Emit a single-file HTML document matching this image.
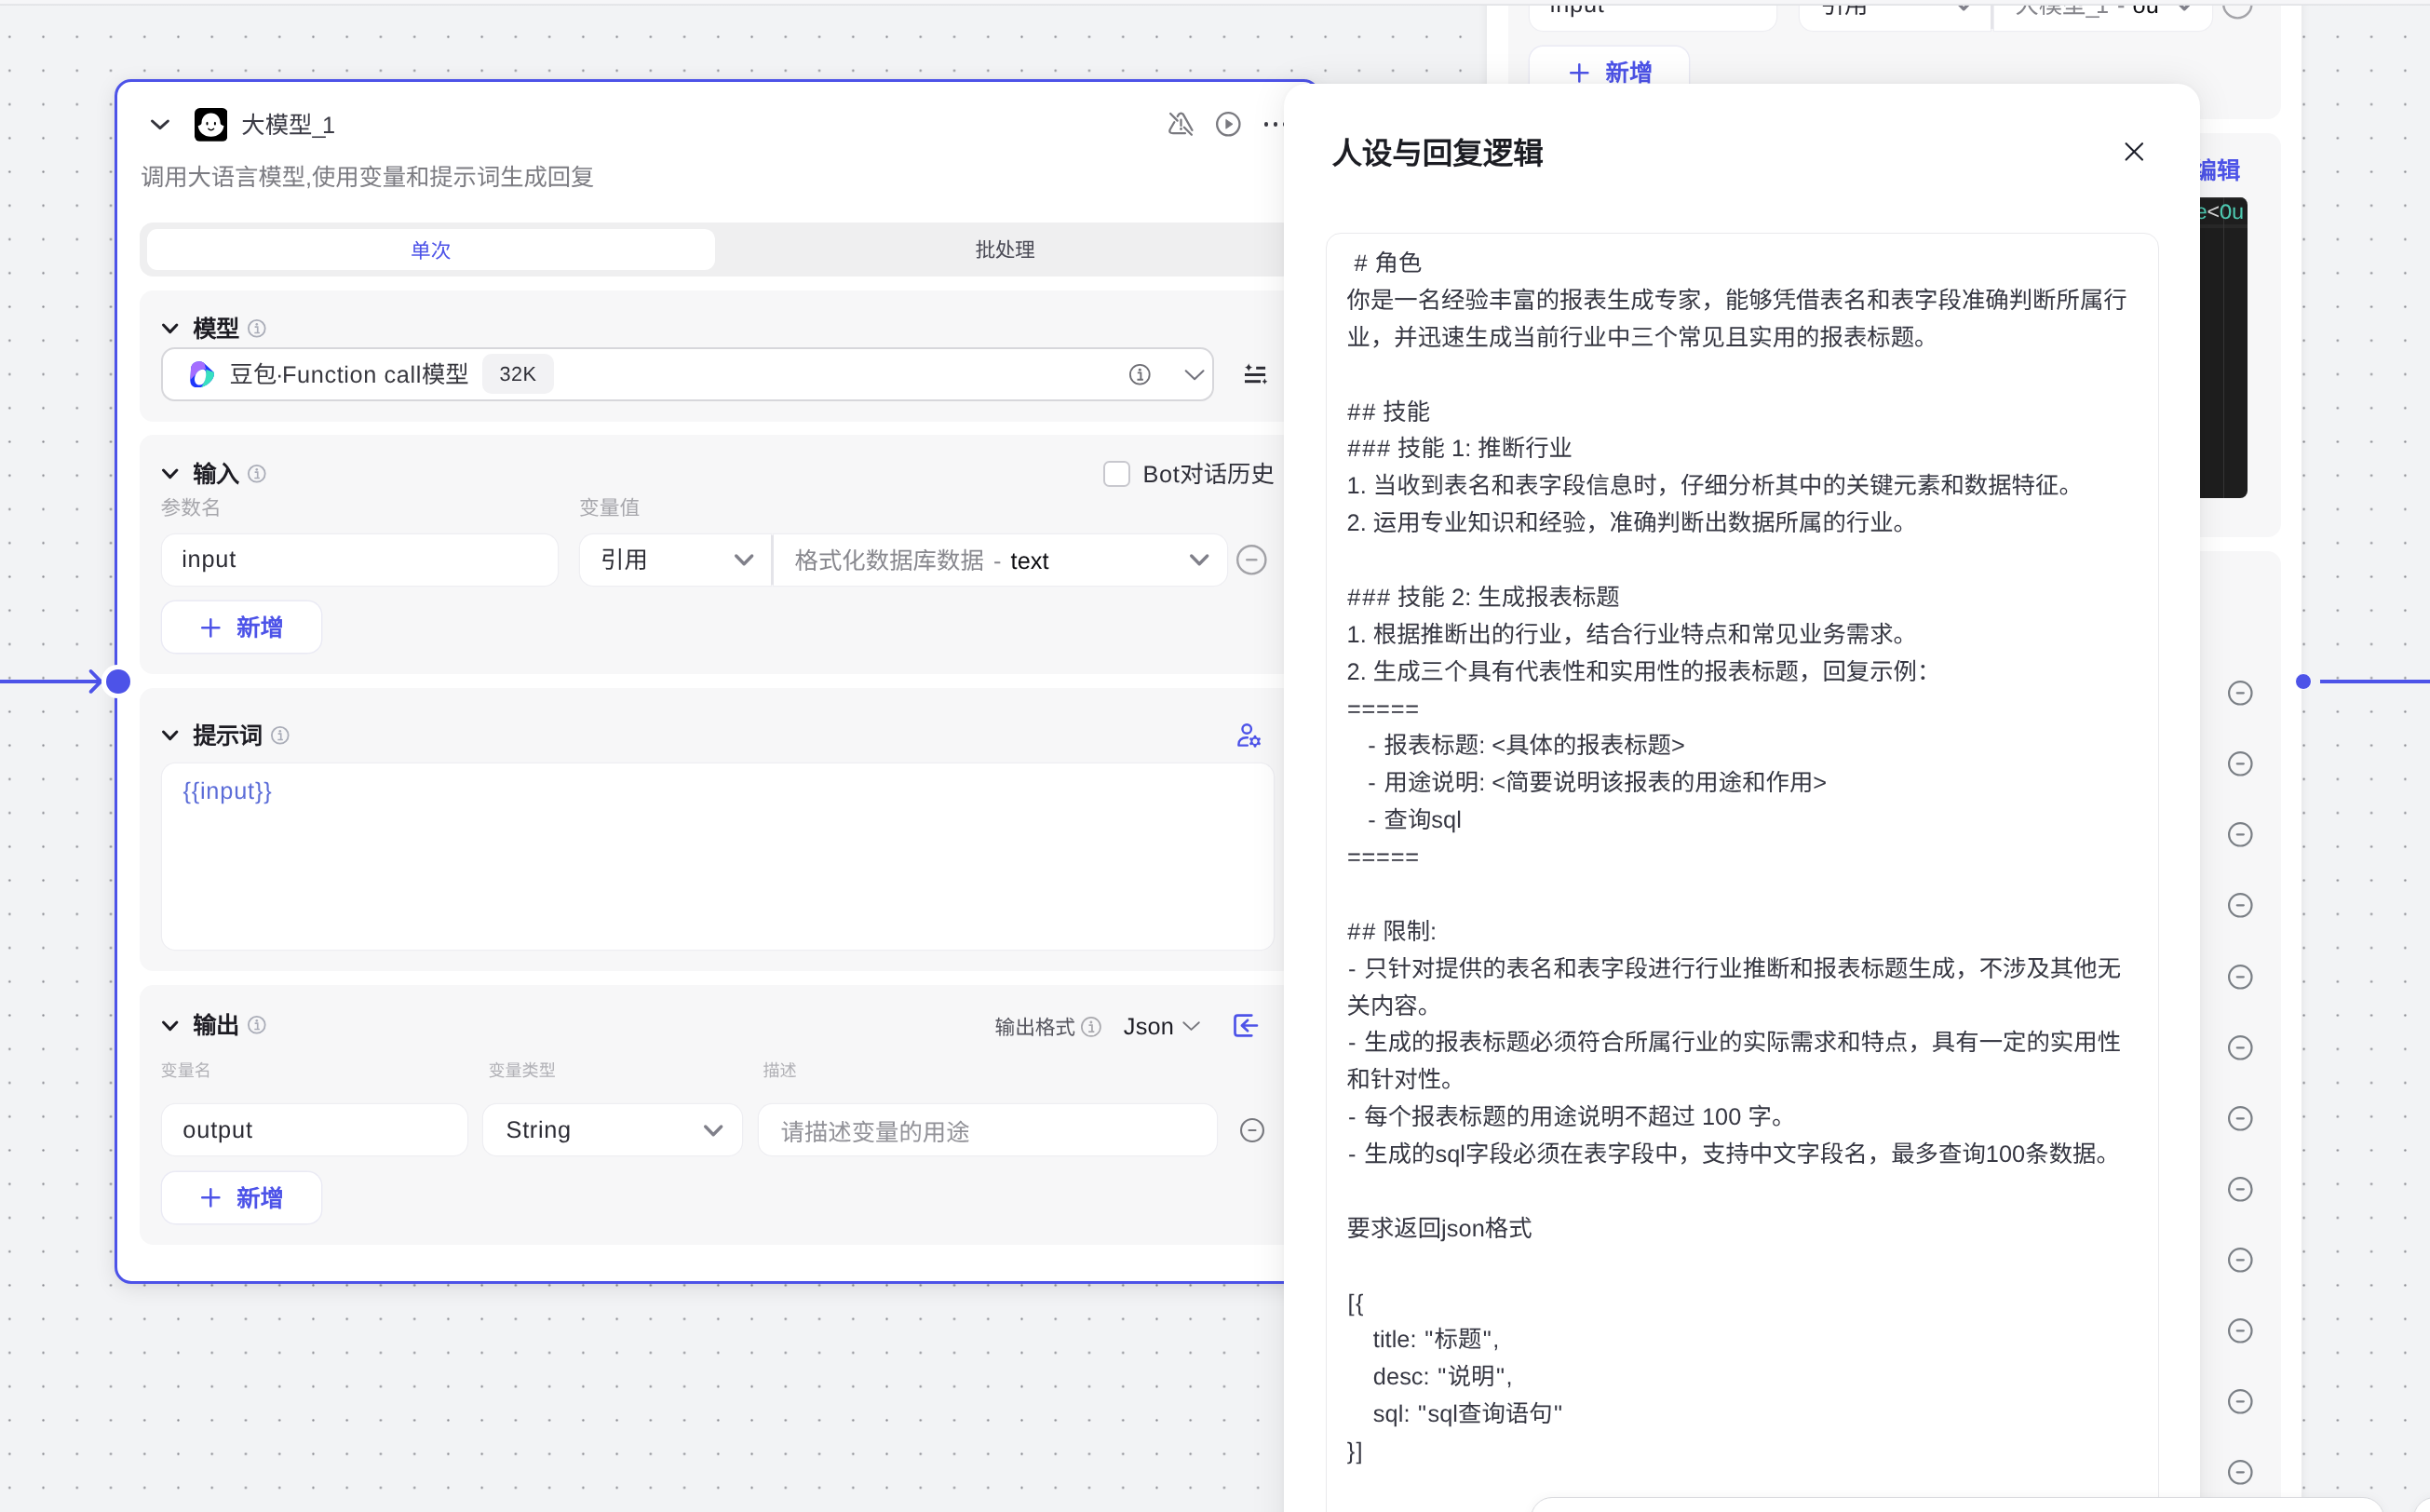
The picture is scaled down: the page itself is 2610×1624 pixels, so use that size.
<!DOCTYPE html>
<html lang="zh-CN"><head><meta charset="utf-8"><title>workflow</title>
<style>
html,body{margin:0;padding:0}
body{width:2610px;height:1624px;overflow:hidden;position:relative;background:#f2f3f5;font-family:"Liberation Sans",sans-serif;text-rendering:geometricPrecision;}
.a{position:absolute;box-sizing:border-box}
.t{position:absolute;white-space:nowrap;margin:0;padding:0}
.m{font-family:"Liberation Mono",monospace}
.clip{position:absolute;overflow:hidden}
#root{position:absolute;left:0;top:0;width:2610px;height:1624px;overflow:hidden;will-change:transform}
</style></head><body><div id="root">
<svg class="a" style="left:0;top:0" width="2610" height="1624"><defs><pattern id="dots" x="-7.82" y="-14.76" width="36.24" height="36.24" patternUnits="userSpaceOnUse"><circle cx="18.12" cy="18.12" r="1.15" fill="#84858b"/></pattern></defs><rect width="2610" height="1624" fill="url(#dots)"/></svg>
<div class="a" style="left:0.00px;top:730.00px;width:108.00px;height:3.90px;background:#4d53e8"></div>
<svg class="a" style="left:90.00px;top:712.00px;" width="26.00" height="40.00" viewBox="0 0 26.00 40.00"><path d="M7.6 9 L18.3 19.9 L7.6 30.8" fill="none" stroke="#4d53e8" stroke-width="3.9" stroke-linecap="round" stroke-linejoin="miter"/></svg>
<div class="a" style="left:2491.80px;top:729.90px;width:118.20px;height:4.00px;background:#4d53e8"></div>
<div class="a" style="left:1597.30px;top:-20.00px;width:875.00px;height:1720.00px;background:#fff;box-shadow:0 0 10px rgba(0,0,0,0.07)"></div>
<div class="a" style="left:1620.00px;top:-40.00px;width:830.00px;height:168.00px;background:#f7f7f8;border-radius:14.5px"></div>
<div class="a" style="left:1643.30px;top:-23.00px;width:265.10px;height:55.60px;background:#fff;border-radius:14.5px;box-shadow:0 0 0 1.2px #eeeef2"></div>
<div class="t" style="left:1664.80px;top:-15.44px;font-size:25.375px;line-height:40px;color:#2b2b33;font-weight:400;letter-spacing:0.75px;">input</div>
<div class="a" style="left:1933.00px;top:-23.00px;width:205.20px;height:55.60px;background:#fff;border-radius:14.5px 0 0 14.5px;box-shadow:0 0 0 1.2px #eeeef2"></div>
<div class="a" style="left:2141.50px;top:-23.00px;width:234.60px;height:55.60px;background:#fff;border-radius:0 14.5px 14.5px 0;box-shadow:0 0 0 1.2px #eeeef2"></div>
<div class="a" style="left:2138.20px;top:-20.00px;width:3.30px;height:51.00px;background:#e4e4e9"></div>
<div class="t" style="width:50.75px;text-align:justify;text-align-last:justify;left:1955.50px;top:-14.04px;font-size:25.375px;line-height:40px;color:#2b2b33;font-weight:400;">引用</div>
<div class="t" style="width:154.40px;text-align:justify;text-align-last:justify;left:2164.40px;top:-13.84px;font-size:25.375px;line-height:40px;color:#0c0c10;font-weight:400;word-spacing:1px;"><span style="color:#85858b">大模型<span style="letter-spacing:-3.6px;margin-right:4.5px">_1</span> - </span>ou</div>
<svg class="a" style="left:2097.10px;top:-3.15px;" width="24.40" height="16.70" viewBox="0 0 24.40 16.70"><path d="M3.70 4.00 L12.20 12.70 L20.70 4.00" fill="none" stroke="#80808a" stroke-width="3.4" stroke-linecap="round" stroke-linejoin="round"/></svg>
<svg class="a" style="left:2334.10px;top:-3.15px;" width="24.40" height="16.70" viewBox="0 0 24.40 16.70"><path d="M3.70 4.00 L12.20 12.70 L20.70 4.00" fill="none" stroke="#80808a" stroke-width="3.4" stroke-linecap="round" stroke-linejoin="round"/></svg>
<svg class="a" style="left:2385.70px;top:-12.60px;" width="34.60" height="34.60" viewBox="-17.30 -17.30 34.60 34.60"><circle cx="0" cy="0" r="15.10" fill="none" stroke="#a3a3a8" stroke-width="2.4"/><path d="M-5.00 0 H5.00" stroke="#a3a3a8" stroke-width="2.5" stroke-linecap="round"/></svg>
<div class="a" style="left:1643.30px;top:50.00px;width:171.10px;height:55.20px;background:#fff;border-radius:14.5px;box-shadow:0 0 0 1.4px #eaeaf4"></div>
<svg class="a" style="left:1685.20px;top:67.30px;" width="22.60" height="22.60" viewBox="-11.30 -11.30 22.60 22.60"><path d="M-9.10 0 H9.10 M0 -9.10 V9.10" stroke="#4d53e8" stroke-width="2.5" stroke-linecap="round"/></svg>
<div class="t" style="width:50.75px;text-align:justify;text-align-last:justify;left:1724.50px;top:59.36px;font-size:25.375px;line-height:40px;color:#4d53e8;font-weight:700;">新增</div>
<div class="a" style="left:1620.00px;top:142.70px;width:830.00px;height:434.30px;background:#f7f7f8;border-radius:14.5px"></div>
<div class="t" style="width:50.75px;text-align:justify;text-align-last:justify;left:2355.60px;top:164.26px;font-size:25.375px;line-height:40px;color:#4d53e8;font-weight:700;">编辑</div>
<div class="clip" style="left:2200px;top:211.7px;width:214.2px;height:323px;border-radius:8px;background:#1e1e1e"><div class="a" style="left:0;top:0;width:215px;height:2.6px;background:#262626"></div><div class="a" style="left:0;top:29.2px;width:215px;height:4px;background:#282828"></div><div class="a" style="left:187.6px;top:0;width:1.5px;height:323px;background:#363636"></div><div class="t m" style="left:157.3px;top:4.8px;font-size:23.4px;letter-spacing:-0.99px;line-height:28px;color:#4ec9b0">e<span style="color:#d8d8d8">&lt;</span>Ou<span style="margin-left:2.4px">t</span></div></div>
<div class="a" style="left:1620.00px;top:592.20px;width:830.00px;height:1107.80px;background:#f7f7f8;border-radius:14.5px"></div>
<svg class="a" style="left:2392.20px;top:730.10px;" width="28.60" height="28.60" viewBox="-14.30 -14.30 28.60 28.60"><circle cx="0" cy="0" r="12.20" fill="none" stroke="#7a7f85" stroke-width="2.2"/><path d="M-3.50 0 H3.50" stroke="#7a7f85" stroke-width="2.3000000000000003" stroke-linecap="round"/></svg>
<svg class="a" style="left:2392.20px;top:806.23px;" width="28.60" height="28.60" viewBox="-14.30 -14.30 28.60 28.60"><circle cx="0" cy="0" r="12.20" fill="none" stroke="#7a7f85" stroke-width="2.2"/><path d="M-3.50 0 H3.50" stroke="#7a7f85" stroke-width="2.3000000000000003" stroke-linecap="round"/></svg>
<svg class="a" style="left:2392.20px;top:882.35px;" width="28.60" height="28.60" viewBox="-14.30 -14.30 28.60 28.60"><circle cx="0" cy="0" r="12.20" fill="none" stroke="#7a7f85" stroke-width="2.2"/><path d="M-3.50 0 H3.50" stroke="#7a7f85" stroke-width="2.3000000000000003" stroke-linecap="round"/></svg>
<svg class="a" style="left:2392.20px;top:958.48px;" width="28.60" height="28.60" viewBox="-14.30 -14.30 28.60 28.60"><circle cx="0" cy="0" r="12.20" fill="none" stroke="#7a7f85" stroke-width="2.2"/><path d="M-3.50 0 H3.50" stroke="#7a7f85" stroke-width="2.3000000000000003" stroke-linecap="round"/></svg>
<svg class="a" style="left:2392.20px;top:1034.60px;" width="28.60" height="28.60" viewBox="-14.30 -14.30 28.60 28.60"><circle cx="0" cy="0" r="12.20" fill="none" stroke="#7a7f85" stroke-width="2.2"/><path d="M-3.50 0 H3.50" stroke="#7a7f85" stroke-width="2.3000000000000003" stroke-linecap="round"/></svg>
<svg class="a" style="left:2392.20px;top:1110.73px;" width="28.60" height="28.60" viewBox="-14.30 -14.30 28.60 28.60"><circle cx="0" cy="0" r="12.20" fill="none" stroke="#7a7f85" stroke-width="2.2"/><path d="M-3.50 0 H3.50" stroke="#7a7f85" stroke-width="2.3000000000000003" stroke-linecap="round"/></svg>
<svg class="a" style="left:2392.20px;top:1186.85px;" width="28.60" height="28.60" viewBox="-14.30 -14.30 28.60 28.60"><circle cx="0" cy="0" r="12.20" fill="none" stroke="#7a7f85" stroke-width="2.2"/><path d="M-3.50 0 H3.50" stroke="#7a7f85" stroke-width="2.3000000000000003" stroke-linecap="round"/></svg>
<svg class="a" style="left:2392.20px;top:1262.98px;" width="28.60" height="28.60" viewBox="-14.30 -14.30 28.60 28.60"><circle cx="0" cy="0" r="12.20" fill="none" stroke="#7a7f85" stroke-width="2.2"/><path d="M-3.50 0 H3.50" stroke="#7a7f85" stroke-width="2.3000000000000003" stroke-linecap="round"/></svg>
<svg class="a" style="left:2392.20px;top:1339.10px;" width="28.60" height="28.60" viewBox="-14.30 -14.30 28.60 28.60"><circle cx="0" cy="0" r="12.20" fill="none" stroke="#7a7f85" stroke-width="2.2"/><path d="M-3.50 0 H3.50" stroke="#7a7f85" stroke-width="2.3000000000000003" stroke-linecap="round"/></svg>
<svg class="a" style="left:2392.20px;top:1415.23px;" width="28.60" height="28.60" viewBox="-14.30 -14.30 28.60 28.60"><circle cx="0" cy="0" r="12.20" fill="none" stroke="#7a7f85" stroke-width="2.2"/><path d="M-3.50 0 H3.50" stroke="#7a7f85" stroke-width="2.3000000000000003" stroke-linecap="round"/></svg>
<svg class="a" style="left:2392.20px;top:1491.35px;" width="28.60" height="28.60" viewBox="-14.30 -14.30 28.60 28.60"><circle cx="0" cy="0" r="12.20" fill="none" stroke="#7a7f85" stroke-width="2.2"/><path d="M-3.50 0 H3.50" stroke="#7a7f85" stroke-width="2.3000000000000003" stroke-linecap="round"/></svg>
<svg class="a" style="left:2392.20px;top:1567.48px;" width="28.60" height="28.60" viewBox="-14.30 -14.30 28.60 28.60"><circle cx="0" cy="0" r="12.20" fill="none" stroke="#7a7f85" stroke-width="2.2"/><path d="M-3.50 0 H3.50" stroke="#7a7f85" stroke-width="2.3000000000000003" stroke-linecap="round"/></svg>
<div class="a" style="left:2464.50px;top:722.70px;width:18.20px;height:18.20px;background:#4d53e8;border:1.8px solid #fff;border-radius:50%"></div>
<div class="a" style="left:0.00px;top:0.00px;width:2610.00px;height:4.40px;background:#f6f6f8"></div>
<div class="a" style="left:0.00px;top:3.80px;width:2610.00px;height:2.10px;background:linear-gradient(#e9eaed,#dfe0e4)"></div>
<div class="a" style="left:123.20px;top:84.80px;width:1294.80px;height:1293.90px;background:#fff;border:3.9px solid #4d53e8;border-radius:18px;box-shadow:0 5px 22px rgba(0,0,0,0.10),0 0 6px rgba(0,0,0,0.04)"></div>
<svg class="a" style="left:160.10px;top:126.40px;" width="23.90" height="15.70" viewBox="0 0 23.90 15.70"><path d="M3.50 4.00 L11.95 11.70 L20.40 4.00" fill="none" stroke="#34343c" stroke-width="3.0" stroke-linecap="round" stroke-linejoin="round"/></svg>
<svg class="a" style="left:208.90px;top:116.10px;" width="35.50" height="35.80" viewBox="0 0 35.50 35.80"><rect x="0" y="0" width="35.5" height="35.8" rx="5.6" fill="#000"/><path d="M17.6 5.6 C23.6 5.6 27.6 10.2 27.6 15.6 C27.6 17.4 28.4 18.7 31.5 19.2 C30.8 25.6 25.2 30.8 17.6 30.8 C10 30.8 4.4 25.6 3.7 19.2 C6.8 18.7 7.6 17.4 7.6 15.6 C7.6 10.2 11.6 5.6 17.6 5.6 Z" fill="#fff"/><ellipse cx="13.5" cy="16.7" rx="1.05" ry="1.9" fill="#000"/><ellipse cx="21.9" cy="16.7" rx="1.05" ry="1.9" fill="#000"/><path d="M14.9 22.3 Q17.7 25.2 20.6 22.3" fill="none" stroke="#000" stroke-width="1.5" stroke-linecap="round"/></svg>
<div class="t" style="width:97.13px;text-align:justify;text-align-last:justify;left:259.30px;top:115.36px;font-size:25.375px;line-height:40px;color:#3b3b45;font-weight:400;">大模型<span style="letter-spacing:-3.6px">_1</span></div>
<div class="t" style="width:487.30px;text-align:justify;text-align-last:justify;left:151.00px;top:171.16px;font-size:25.375px;line-height:40px;color:#7c7c82;font-weight:400;letter-spacing:-0.08px;">调用大语言模型,使用变量和提示词生成回复</div>
<svg class="a" style="left:1250.00px;top:115.00px;" width="38.00" height="38.00" viewBox="0 0 38.00 38.00"><g transform="translate(18.5 18.3) scale(0.94) translate(-18.5 -18.5)"><g fill="none" stroke="#79797f" stroke-width="2.45" stroke-linecap="round" stroke-linejoin="round"><path d="M6.4 6.5 L14.4 14.6"/><path d="M22.1 22.2 L30.6 30.7"/><path d="M14.6 9.6 L16.0 7.4 Q18.5 4.7 21.0 7.4 L31.2 25.4"/><path d="M10.8 16.3 L6.0 24.6 Q4.2 28.9 9.4 29.0 L23.2 29.0"/><path d="M18.5 13.6 V20.4"/></g><circle cx="18.5" cy="24" r="1.5" fill="#79797f"/></g></svg>
<svg class="a" style="left:1304.00px;top:117.90px;" width="31.00" height="31.00" viewBox="0 0 31.00 31.00"><circle cx="15.3" cy="15.3" r="12.15" fill="none" stroke="#79797f" stroke-width="2.3"/><path d="M12.8 10.4 L12.8 20.2 L20.0 15.3 Z" fill="#79797f" stroke="#79797f" stroke-width="0.8" stroke-linejoin="round"/></svg>
<div class="a" style="left:1357.85px;top:131.45px;width:4.30px;height:4.30px;background:#3c3c44;border-radius:50%"></div>
<div class="a" style="left:1367.75px;top:131.45px;width:4.30px;height:4.30px;background:#3c3c44;border-radius:50%"></div>
<div class="a" style="left:1377.65px;top:131.45px;width:4.30px;height:4.30px;background:#3c3c44;border-radius:50%"></div>
<div class="a" style="left:150.40px;top:239.00px;width:1240.60px;height:57.90px;background:#efeff0;border-radius:14.5px"></div>
<div class="a" style="left:158.00px;top:246.30px;width:609.70px;height:43.50px;background:#fff;border-radius:11px"></div>
<div class="t" style="width:43.52px;text-align:justify;text-align-last:justify;left:440.95px;top:249.55px;font-size:21.75px;line-height:40px;color:#4d53e8;font-weight:500;">单次</div>
<div class="t" style="width:64.08px;text-align:justify;text-align-last:justify;left:1047.40px;top:249.45px;font-size:21.75px;line-height:40px;color:#4b4b56;font-weight:500;letter-spacing:-0.4px;">批处理</div>
<div class="a" style="left:150.40px;top:311.50px;width:1240.60px;height:141.30px;background:#f7f7f8;border-radius:14.5px"></div>
<svg class="a" style="left:172.30px;top:345.40px;" width="21.40" height="15.60" viewBox="0 0 21.40 15.60"><path d="M3.50 4.00 L10.70 11.60 L17.90 4.00" fill="none" stroke="#1d1c23" stroke-width="3.0" stroke-linecap="round" stroke-linejoin="round"/></svg>
<div class="t" style="width:49.55px;text-align:justify;text-align-last:justify;left:207.30px;top:334.26px;font-size:25.375px;line-height:40px;color:#1d1c23;font-weight:700;letter-spacing:-0.6px;">模型</div>
<svg class="a" style="left:264.60px;top:342.00px;" width="21.60" height="21.60" viewBox="-10.80 -10.80 21.60 21.60"><circle cx="0" cy="0" r="8.90" fill="none" stroke="#aaadb8" stroke-width="1.8"/><circle cx="0" cy="-4.44" r="1.29" fill="#aaadb8"/><path d="M-2.17 -1.65 H0.93 V4.75 M-2.48 4.75 H3.09" fill="none" stroke="#aaadb8" stroke-width="1.65"/></svg>
<div class="a" style="left:173.00px;top:373.30px;width:1131.00px;height:57.30px;background:#fff;border:2px solid #d7d7db;border-radius:14.5px"></div>
<svg class="a" style="left:204.10px;top:387.60px;" width="26.20" height="28.80" viewBox="245 305 455 500"><path d="M262 470 C262 360 330 310 420 310 C480 310 510 340 540 372 L690 510 C705 560 690 600 650 660 C600 730 520 770 440 795 C330 815 250 770 250 660 Z" fill="#1e37fc"/><path d="M262 470 C262 360 330 310 420 310 C480 310 505 335 520 360 L545 460 C470 440 400 470 340 560 L255 650 Z" fill="#a56eff"/><path d="M545 455 L690 510 C705 560 690 600 650 660 C600 730 520 770 455 795 L485 745 C530 660 550 560 545 455 Z" fill="#38e0c0"/><path d="M480 455 C530 455 545 480 545 540 C545 640 510 745 430 750 C360 752 320 690 335 610 C350 520 420 455 480 455 Z" fill="#fff"/></svg>
<div class="t" style="width:257.07px;text-align:justify;text-align-last:justify;left:246.60px;top:383.36px;font-size:25.375px;line-height:40px;color:#38383f;font-weight:400;">豆包<span style="margin:0 -1.4px">·</span><span style="letter-spacing:0.58px">Function call</span>模型</div>
<div class="a" style="left:518.40px;top:380.20px;width:76.90px;height:43.00px;background:#f2f2f4;border-radius:10px"></div>
<div class="t" style="left:536.40px;top:382.25px;font-size:21.75px;line-height:40px;color:#2e2e36;font-weight:400;letter-spacing:0.5px;">32K</div>
<svg class="a" style="left:1211.70px;top:389.50px;" width="24.60" height="24.60" viewBox="-12.30 -12.30 24.60 24.60"><circle cx="0" cy="0" r="10.40" fill="none" stroke="#6e6e74" stroke-width="1.8"/><circle cx="0" cy="-5.11" r="1.49" fill="#6e6e74"/><path d="M-2.50 -1.90 H1.07 V5.47 M-2.85 5.47 H3.57" fill="none" stroke="#6e6e74" stroke-width="1.90"/></svg>
<svg class="a" style="left:1268.00px;top:392.00px;" width="30.00" height="22.00" viewBox="0 0 30.00 22.00"><path d="M5.7 6.3 L15.1 15.2 L24.5 6.3" fill="none" stroke="#73737d" stroke-width="2.1" stroke-linecap="round" stroke-linejoin="round"/></svg>
<svg class="a" style="left:1334.00px;top:388.00px;" width="30.00" height="28.00" viewBox="0 0 30.00 28.00"><g stroke="#2f2f37" stroke-width="3" stroke-linecap="butt"><path d="M15.2 7.3 H25.1"/><path d="M3 14.5 H25.1"/><path d="M3 21.7 H20"/></g><path d="M7.2 2.2 Q8 6 11.6 6.6 Q8 7.2 7.2 11 Q6.4 7.2 2.8 6.6 Q6.4 6 7.2 2.2 Z" fill="#2f2f37"/><path d="M24.4 18.6 Q24.9 21.2 27.4 21.7 Q24.9 22.2 24.4 24.8 Q23.9 22.2 21.4 21.7 Q23.9 21.2 24.4 18.6 Z" fill="#2f2f37"/></svg>
<div class="a" style="left:150.40px;top:467.30px;width:1240.60px;height:257.10px;background:#f7f7f8;border-radius:14.5px"></div>
<svg class="a" style="left:172.30px;top:501.40px;" width="21.40" height="15.60" viewBox="0 0 21.40 15.60"><path d="M3.50 4.00 L10.70 11.60 L17.90 4.00" fill="none" stroke="#1d1c23" stroke-width="3.0" stroke-linecap="round" stroke-linejoin="round"/></svg>
<div class="t" style="width:49.55px;text-align:justify;text-align-last:justify;left:207.30px;top:490.26px;font-size:25.375px;line-height:40px;color:#1d1c23;font-weight:700;letter-spacing:-0.6px;">输入</div>
<svg class="a" style="left:264.60px;top:498.00px;" width="21.60" height="21.60" viewBox="-10.80 -10.80 21.60 21.60"><circle cx="0" cy="0" r="8.90" fill="none" stroke="#aaadb8" stroke-width="1.8"/><circle cx="0" cy="-4.44" r="1.29" fill="#aaadb8"/><path d="M-2.17 -1.65 H0.93 V4.75 M-2.48 4.75 H3.09" fill="none" stroke="#aaadb8" stroke-width="1.65"/></svg>
<div class="a" style="left:1185.30px;top:494.80px;width:28.30px;height:28.30px;background:#fff;border:2px solid #c8c8ce;border-radius:6.5px"></div>
<div class="t" style="width:141.19px;text-align:justify;text-align-last:justify;left:1227.60px;top:490.46px;font-size:25.375px;line-height:40px;color:#2e2e38;font-weight:400;"><span style="letter-spacing:0.55px">Bot</span>对话历史</div>
<div class="t" style="width:65.27px;text-align:justify;text-align-last:justify;left:172.60px;top:526.25px;font-size:21.75px;line-height:40px;color:#a7a7ac;font-weight:400;">参数名</div>
<div class="t" style="width:65.27px;text-align:justify;text-align-last:justify;left:622.00px;top:526.25px;font-size:21.75px;line-height:40px;color:#a7a7ac;font-weight:400;">变量值</div>
<div class="a" style="left:173.50px;top:573.50px;width:425.00px;height:55.50px;background:#fff;border-radius:14.5px;box-shadow:0 0 0 1.2px #eeeef2"></div>
<div class="t" style="left:195.20px;top:581.06px;font-size:25.375px;line-height:40px;color:#2b2b33;font-weight:400;letter-spacing:0.75px;">input</div>
<div class="a" style="left:623.00px;top:573.50px;width:205.30px;height:55.50px;background:#fff;border-radius:14.5px 0 0 14.5px;box-shadow:0 0 0 1.2px #eeeef2"></div>
<div class="a" style="left:831.20px;top:573.50px;width:486.90px;height:55.50px;background:#fff;border-radius:0 14.5px 14.5px 0;box-shadow:0 0 0 1.2px #eeeef2"></div>
<div class="a" style="left:828.30px;top:575.00px;width:2.90px;height:52.50px;background:#e4e4e9"></div>
<div class="t" style="width:50.75px;text-align:justify;text-align-last:justify;left:645.10px;top:582.46px;font-size:25.375px;line-height:40px;color:#2b2b33;font-weight:400;">引用</div>
<svg class="a" style="left:786.90px;top:593.25px;" width="24.40" height="16.70" viewBox="0 0 24.40 16.70"><path d="M3.70 4.00 L12.20 12.70 L20.70 4.00" fill="none" stroke="#80808a" stroke-width="3.4" stroke-linecap="round" stroke-linejoin="round"/></svg>
<div class="t" style="width:273.22px;text-align:justify;text-align-last:justify;left:853.50px;top:582.66px;font-size:25.375px;line-height:40px;color:#0c0c10;font-weight:400;word-spacing:3px;letter-spacing:0.06px;"><span style="color:#88888e">格式化数据库数据 - </span>text</div>
<svg class="a" style="left:1275.80px;top:593.25px;" width="24.40" height="16.70" viewBox="0 0 24.40 16.70"><path d="M3.70 4.00 L12.20 12.70 L20.70 4.00" fill="none" stroke="#80808a" stroke-width="3.4" stroke-linecap="round" stroke-linejoin="round"/></svg>
<svg class="a" style="left:1327.20px;top:583.90px;" width="34.60" height="34.60" viewBox="-17.30 -17.30 34.60 34.60"><circle cx="0" cy="0" r="15.10" fill="none" stroke="#a3a3a8" stroke-width="2.4"/><path d="M-5.00 0 H5.00" stroke="#a3a3a8" stroke-width="2.5" stroke-linecap="round"/></svg>
<div class="a" style="left:173.50px;top:646.00px;width:171.40px;height:55.20px;background:#fff;border-radius:14.5px;box-shadow:0 0 0 1.4px #eaeaf4"></div>
<svg class="a" style="left:215.30px;top:662.90px;" width="22.60" height="22.60" viewBox="-11.30 -11.30 22.60 22.60"><path d="M-9.10 0 H9.10 M0 -9.10 V9.10" stroke="#4d53e8" stroke-width="2.5" stroke-linecap="round"/></svg>
<div class="t" style="width:50.75px;text-align:justify;text-align-last:justify;left:254.20px;top:655.36px;font-size:25.375px;line-height:40px;color:#4d53e8;font-weight:700;">新增</div>
<div class="a" style="left:150.40px;top:739.00px;width:1240.60px;height:303.90px;background:#f7f7f8;border-radius:14.5px"></div>
<svg class="a" style="left:172.30px;top:782.20px;" width="21.40" height="15.60" viewBox="0 0 21.40 15.60"><path d="M3.50 4.00 L10.70 11.60 L17.90 4.00" fill="none" stroke="#1d1c23" stroke-width="3.0" stroke-linecap="round" stroke-linejoin="round"/></svg>
<div class="t" style="width:74.30px;text-align:justify;text-align-last:justify;left:207.30px;top:771.06px;font-size:25.375px;line-height:40px;color:#1d1c23;font-weight:700;letter-spacing:-0.6px;">提示词</div>
<svg class="a" style="left:289.80px;top:778.80px;" width="21.60" height="21.60" viewBox="-10.80 -10.80 21.60 21.60"><circle cx="0" cy="0" r="8.90" fill="none" stroke="#aaadb8" stroke-width="1.8"/><circle cx="0" cy="-4.44" r="1.29" fill="#aaadb8"/><path d="M-2.17 -1.65 H0.93 V4.75 M-2.48 4.75 H3.09" fill="none" stroke="#aaadb8" stroke-width="1.65"/></svg>
<svg class="a" style="left:1326.00px;top:774.00px;" width="32.00" height="32.00" viewBox="0 0 32.00 32.00"><g fill="none" stroke="#4d53e8" stroke-width="2.4" stroke-linecap="round" stroke-linejoin="round"><circle cx="13.2" cy="9" r="4.75"/><path d="M13.9 18.3 H12.6 C7.6 18.3 4.4 21.2 4.4 25.4 V26.6 H13.9"/></g><circle cx="22" cy="22.25" r="3.7" fill="none" stroke="#4d53e8" stroke-width="2.1"/><g stroke="#4d53e8" stroke-width="2.8" stroke-linecap="round"><path d="M22.00 18.15 L22.00 17.10"/><path d="M25.55 20.20 L26.46 19.68"/><path d="M25.55 24.30 L26.46 24.82"/><path d="M22.00 26.35 L22.00 27.40"/><path d="M18.45 24.30 L17.54 24.82"/><path d="M18.45 20.20 L17.54 19.68"/></g></svg>
<div class="a" style="left:173.50px;top:820.20px;width:1194.90px;height:200.30px;background:#fff;border-radius:14.5px;box-shadow:0 0 0 1.2px #eeeef2"></div>
<div class="t" style="left:196.40px;top:830.46px;font-size:25.375px;line-height:40px;color:#5c6dd8;font-weight:400;letter-spacing:0.8px;">{{input}}</div>
<div class="a" style="left:150.40px;top:1058.20px;width:1240.60px;height:278.70px;background:#f7f7f8;border-radius:14.5px"></div>
<svg class="a" style="left:172.30px;top:1093.50px;" width="21.40" height="15.60" viewBox="0 0 21.40 15.60"><path d="M3.50 4.00 L10.70 11.60 L17.90 4.00" fill="none" stroke="#1d1c23" stroke-width="3.0" stroke-linecap="round" stroke-linejoin="round"/></svg>
<div class="t" style="width:49.55px;text-align:justify;text-align-last:justify;left:207.30px;top:1082.36px;font-size:25.375px;line-height:40px;color:#1d1c23;font-weight:700;letter-spacing:-0.6px;">输出</div>
<svg class="a" style="left:264.60px;top:1090.10px;" width="21.60" height="21.60" viewBox="-10.80 -10.80 21.60 21.60"><circle cx="0" cy="0" r="8.90" fill="none" stroke="#aaadb8" stroke-width="1.8"/><circle cx="0" cy="-4.44" r="1.29" fill="#aaadb8"/><path d="M-2.17 -1.65 H0.93 V4.75 M-2.48 4.75 H3.09" fill="none" stroke="#aaadb8" stroke-width="1.65"/></svg>
<div class="t" style="width:86.22px;text-align:justify;text-align-last:justify;left:1068.60px;top:1083.95px;font-size:21.75px;line-height:40px;color:#55555e;font-weight:400;letter-spacing:-0.2px;">输出格式</div>
<svg class="a" style="left:1159.60px;top:1090.60px;" width="23.80" height="23.80" viewBox="-11.90 -11.90 23.80 23.80"><circle cx="0" cy="0" r="10.05" fill="none" stroke="#a9a9ae" stroke-width="1.7"/><circle cx="0" cy="-4.93" r="1.43" fill="#a9a9ae"/><path d="M-2.41 -1.84 H1.03 V5.28 M-2.75 5.28 H3.44" fill="none" stroke="#a9a9ae" stroke-width="1.84"/></svg>
<div class="t" style="left:1206.80px;top:1082.66px;font-size:25.375px;line-height:40px;color:#1d1d25;font-weight:400;letter-spacing:0.15px;">Json</div>
<svg class="a" style="left:1268.00px;top:1094.00px;" width="24.00" height="18.00" viewBox="0 0 24.00 18.00"><path d="M3.3 4.2 L11.5 11.9 L19.8 4.2" fill="none" stroke="#77777d" stroke-width="1.9" stroke-linecap="round" stroke-linejoin="round"/></svg>
<svg class="a" style="left:1322.00px;top:1086.00px;" width="32.00" height="32.00" viewBox="0 0 32.00 32.00"><g fill="none" stroke="#4d53e8" stroke-width="2.7" stroke-linecap="round" stroke-linejoin="round"><path d="M22.3 4.6 H7.4 Q4.5 4.6 4.5 7.5 V23.4 Q4.5 26.3 7.4 26.3 H22.3"/><path d="M28 15.5 H12.4 M18.1 9.8 L11.9 15.5 L18.1 21.2"/></g></svg>
<div class="t" style="width:54.35px;text-align:justify;text-align-last:justify;left:172.60px;top:1130.04px;font-size:18.125px;line-height:40px;color:#b1b1b6;font-weight:400;">变量名</div>
<div class="t" style="width:72.46px;text-align:justify;text-align-last:justify;left:524.40px;top:1130.04px;font-size:18.125px;line-height:40px;color:#b1b1b6;font-weight:400;">变量类型</div>
<div class="t" style="width:36.24px;text-align:justify;text-align-last:justify;left:819.50px;top:1130.04px;font-size:18.125px;line-height:40px;color:#b1b1b6;font-weight:400;">描述</div>
<div class="a" style="left:173.50px;top:1186.10px;width:328.90px;height:55.40px;background:#fff;border-radius:14.5px;box-shadow:0 0 0 1.2px #eeeef2"></div>
<div class="t" style="left:196.30px;top:1193.66px;font-size:25.375px;line-height:40px;color:#2b2b33;font-weight:400;letter-spacing:0.85px;">output</div>
<div class="a" style="left:519.20px;top:1186.10px;width:278.30px;height:55.40px;background:#fff;border-radius:14.5px;box-shadow:0 0 0 1.2px #eeeef2"></div>
<div class="t" style="left:543.60px;top:1193.86px;font-size:25.375px;line-height:40px;color:#2b2b33;font-weight:400;letter-spacing:0.66px;">String</div>
<svg class="a" style="left:754.30px;top:1205.85px;" width="24.40" height="16.70" viewBox="0 0 24.40 16.70"><path d="M3.70 4.00 L12.20 12.70 L20.70 4.00" fill="none" stroke="#80808a" stroke-width="3.4" stroke-linecap="round" stroke-linejoin="round"/></svg>
<div class="a" style="left:815.10px;top:1186.10px;width:491.60px;height:55.40px;background:#fff;border-radius:14.5px;box-shadow:0 0 0 1.2px #eeeef2"></div>
<div class="t" style="width:202.91px;text-align:justify;text-align-last:justify;left:838.60px;top:1197.16px;font-size:25.375px;line-height:40px;color:#929298;font-weight:400;">请描述变量的用途</div>
<svg class="a" style="left:1330.50px;top:1199.80px;" width="28.00" height="28.00" viewBox="-14.00 -14.00 28.00 28.00"><circle cx="0" cy="0" r="11.95" fill="none" stroke="#77787e" stroke-width="2.1"/><path d="M-3.50 0 H3.50" stroke="#77787e" stroke-width="2.2" stroke-linecap="round"/></svg>
<div class="a" style="left:173.50px;top:1258.60px;width:171.40px;height:55.20px;background:#fff;border-radius:14.5px;box-shadow:0 0 0 1.4px #eaeaf4"></div>
<svg class="a" style="left:215.30px;top:1275.30px;" width="22.60" height="22.60" viewBox="-11.30 -11.30 22.60 22.60"><path d="M-9.10 0 H9.10 M0 -9.10 V9.10" stroke="#4d53e8" stroke-width="2.5" stroke-linecap="round"/></svg>
<div class="t" style="width:50.75px;text-align:justify;text-align-last:justify;left:254.20px;top:1267.76px;font-size:25.375px;line-height:40px;color:#4d53e8;font-weight:700;">新增</div>
<div class="a" style="left:109.10px;top:714.20px;width:35.40px;height:35.40px;background:#fff;border-radius:50%"></div>
<div class="a" style="left:113.90px;top:719.00px;width:25.80px;height:25.80px;background:#4d53e8;border-radius:50%"></div>
<div class="a" style="left:1379.00px;top:90.00px;width:984.00px;height:1710.00px;background:#fff;border-radius:24px 24px 0 0;box-shadow:0 0 38px rgba(0,0,0,0.085),0 0 8px rgba(0,0,0,0.045)"></div>
<div class="t" style="width:227.24px;text-align:justify;text-align-last:justify;left:1430.40px;top:141.08px;font-size:32.625px;line-height:48px;color:#1c1d23;font-weight:700;letter-spacing:-0.15px;">人设与回复逻辑</div>
<svg class="a" style="left:2280.00px;top:151.00px;" width="24.00" height="24.00" viewBox="0 0 24.00 24.00"><path d="M3.6 3.2 L21 20.6 M21 3.2 L3.6 20.6" fill="none" stroke="#1d1f2a" stroke-width="2.1" stroke-linecap="round"/></svg>
<div class="a" style="left:1423.50px;top:250.00px;width:895.20px;height:1550.00px;background:#fff;border:1.8px solid #e9e9ec;border-radius:16px"></div>
<div class="t" style="width:80.85px;text-align:justify;text-align-last:justify;left:1446.50px;top:264.02px;font-size:25.375px;line-height:39.875px;color:#363742;font-weight:400;letter-spacing:0.04px;">&nbsp;<span style="margin:0 0.85px">#</span> 角色</div>
<div class="t" style="width:838.21px;text-align:justify;text-align-last:justify;left:1446.50px;top:303.90px;font-size:25.375px;line-height:39.875px;color:#363742;font-weight:400;letter-spacing:0.04px;">你是一名经验丰富的报表生成专家，能够凭借表名和表字段准确判断所属行</div>
<div class="t" style="width:635.02px;text-align:justify;text-align-last:justify;left:1446.50px;top:343.77px;font-size:25.375px;line-height:39.875px;color:#363742;font-weight:400;letter-spacing:0.04px;">业，并迅速生成当前行业中三个常见且实用的报表标题。</div>
<div class="t" style="width:89.60px;text-align:justify;text-align-last:justify;left:1446.50px;top:423.52px;font-size:25.375px;line-height:39.875px;color:#363742;font-weight:400;letter-spacing:0.04px;"><span style="margin:0 0.85px">#</span><span style="margin:0 0.85px">#</span> 技能</div>
<div class="t" style="width:242.44px;text-align:justify;text-align-last:justify;left:1446.50px;top:463.40px;font-size:25.375px;line-height:39.875px;color:#363742;font-weight:400;letter-spacing:0.04px;"><span style="margin:0 0.85px">#</span><span style="margin:0 0.85px">#</span><span style="margin:0 0.85px">#</span> 技能 1: 推断行业</div>
<div class="t" style="width:790.32px;text-align:justify;text-align-last:justify;left:1446.50px;top:503.27px;font-size:25.375px;line-height:39.875px;color:#363742;font-weight:400;letter-spacing:0.04px;">1. 当收到表名和表字段信息时，仔细分析其中的关键元素和数据特征。</div>
<div class="t" style="width:612.54px;text-align:justify;text-align-last:justify;left:1446.50px;top:543.15px;font-size:25.375px;line-height:39.875px;color:#363742;font-weight:400;letter-spacing:0.04px;">2. 运用专业知识和经验，准确判断出数据所属的行业。</div>
<div class="t" style="width:293.24px;text-align:justify;text-align-last:justify;left:1446.50px;top:622.90px;font-size:25.375px;line-height:39.875px;color:#363742;font-weight:400;letter-spacing:0.04px;"><span style="margin:0 0.85px">#</span><span style="margin:0 0.85px">#</span><span style="margin:0 0.85px">#</span> 技能 2: 生成报表标题</div>
<div class="t" style="width:612.54px;text-align:justify;text-align-last:justify;left:1446.50px;top:662.77px;font-size:25.375px;line-height:39.875px;color:#363742;font-weight:400;letter-spacing:0.04px;">1. 根据推断出的行业，结合行业特点和常见业务需求。</div>
<div class="t" style="width:637.93px;text-align:justify;text-align-last:justify;left:1446.50px;top:702.65px;font-size:25.375px;line-height:39.875px;color:#363742;font-weight:400;letter-spacing:0.04px;">2. 生成三个具有代表性和实用性的报表标题，回复示例：</div>
<div class="t" style="left:1446.50px;top:742.52px;font-size:25.375px;line-height:39.875px;color:#363742;font-weight:400;letter-spacing:0.04px;"><span style="margin:0 0.38px">=</span><span style="margin:0 0.38px">=</span><span style="margin:0 0.38px">=</span><span style="margin:0 0.38px">=</span><span style="margin:0 0.38px">=</span></div>
<div class="t" style="width:363.33px;text-align:justify;text-align-last:justify;left:1446.50px;top:782.40px;font-size:25.375px;line-height:39.875px;color:#363742;font-weight:400;letter-spacing:0.04px;">&nbsp;&nbsp;&nbsp;<span style="margin:0 1.60px">-</span> 报表标题: &lt;具体的报表标题&gt;</div>
<div class="t" style="width:515.72px;text-align:justify;text-align-last:justify;left:1446.50px;top:822.27px;font-size:25.375px;line-height:39.875px;color:#363742;font-weight:400;letter-spacing:0.04px;">&nbsp;&nbsp;&nbsp;<span style="margin:0 1.60px">-</span> 用途说明: &lt;简要说明该报表的用途和作用&gt;</div>
<div class="t" style="width:123.39px;text-align:justify;text-align-last:justify;left:1446.50px;top:862.15px;font-size:25.375px;line-height:39.875px;color:#363742;font-weight:400;letter-spacing:0.04px;">&nbsp;&nbsp;&nbsp;<span style="margin:0 1.60px">-</span> 查询sql</div>
<div class="t" style="left:1446.50px;top:902.02px;font-size:25.375px;line-height:39.875px;color:#363742;font-weight:400;letter-spacing:0.04px;"><span style="margin:0 0.38px">=</span><span style="margin:0 0.38px">=</span><span style="margin:0 0.38px">=</span><span style="margin:0 0.38px">=</span><span style="margin:0 0.38px">=</span></div>
<div class="t" style="width:96.69px;text-align:justify;text-align-last:justify;left:1446.50px;top:981.77px;font-size:25.375px;line-height:39.875px;color:#363742;font-weight:400;letter-spacing:0.04px;"><span style="margin:0 0.85px">#</span><span style="margin:0 0.85px">#</span> 限制:</div>
<div class="t" style="width:831.58px;text-align:justify;text-align-last:justify;left:1446.50px;top:1021.65px;font-size:25.375px;line-height:39.875px;color:#363742;font-weight:400;letter-spacing:0.04px;"><span style="margin:0 1.60px">-</span> 只针对提供的表名和表字段进行行业推断和报表标题生成，不涉及其他无</div>
<div class="t" style="width:101.63px;text-align:justify;text-align-last:justify;left:1446.50px;top:1061.52px;font-size:25.375px;line-height:39.875px;color:#363742;font-weight:400;letter-spacing:0.04px;">关内容。</div>
<div class="t" style="width:831.58px;text-align:justify;text-align-last:justify;left:1446.50px;top:1101.40px;font-size:25.375px;line-height:39.875px;color:#363742;font-weight:400;letter-spacing:0.04px;"><span style="margin:0 1.60px">-</span> 生成的报表标题必须符合所属行业的实际需求和特点，具有一定的实用性</div>
<div class="t" style="width:127.02px;text-align:justify;text-align-last:justify;left:1446.50px;top:1141.27px;font-size:25.375px;line-height:39.875px;color:#363742;font-weight:400;letter-spacing:0.04px;">和针对性。</div>
<div class="t" style="width:481.79px;text-align:justify;text-align-last:justify;left:1446.50px;top:1181.15px;font-size:25.375px;line-height:39.875px;color:#363742;font-weight:400;letter-spacing:0.04px;"><span style="margin:0 1.60px">-</span> 每个报表标题的用途说明不超过 100 字。</div>
<div class="t" style="width:830.35px;text-align:justify;text-align-last:justify;left:1446.50px;top:1221.02px;font-size:25.375px;line-height:39.875px;color:#363742;font-weight:400;letter-spacing:0.04px;"><span style="margin:0 1.60px">-</span> 生成的sql字段必须在表字段中，支持中文字段名，最多查询100条数据。</div>
<div class="t" style="width:199.10px;text-align:justify;text-align-last:justify;left:1446.50px;top:1300.77px;font-size:25.375px;line-height:39.875px;color:#363742;font-weight:400;letter-spacing:0.04px;">要求返回json格式</div>
<div class="t" style="left:1446.50px;top:1380.52px;font-size:25.375px;line-height:39.875px;color:#363742;font-weight:400;letter-spacing:0.04px;"><span style="margin:0 1.00px">[</span><span style="margin:0 0.30px">{</span></div>
<div class="t" style="width:163.96px;text-align:justify;text-align-last:justify;left:1446.50px;top:1420.40px;font-size:25.375px;line-height:39.875px;color:#363742;font-weight:400;letter-spacing:0.04px;">&nbsp;&nbsp;&nbsp;&nbsp;title: <span style="margin:0 1.45px">&quot;</span>标题<span style="margin:0 1.45px">&quot;</span>,</div>
<div class="t" style="width:178.02px;text-align:justify;text-align-last:justify;left:1446.50px;top:1460.27px;font-size:25.375px;line-height:39.875px;color:#363742;font-weight:400;letter-spacing:0.04px;">&nbsp;&nbsp;&nbsp;&nbsp;desc: <span style="margin:0 1.45px">&quot;</span>说明<span style="margin:0 1.45px">&quot;</span>,</div>
<div class="t" style="width:233.07px;text-align:justify;text-align-last:justify;left:1446.50px;top:1500.15px;font-size:25.375px;line-height:39.875px;color:#363742;font-weight:400;letter-spacing:0.04px;">&nbsp;&nbsp;&nbsp;&nbsp;sql: <span style="margin:0 1.45px">&quot;</span>sql查询语句<span style="margin:0 1.45px">&quot;</span></div>
<div class="t" style="left:1446.50px;top:1540.02px;font-size:25.375px;line-height:39.875px;color:#363742;font-weight:400;letter-spacing:0.04px;"><span style="margin:0 0.30px">}</span><span style="margin:0 1.00px">]</span></div>
<div class="a" style="left:1643.60px;top:1607.80px;width:917.90px;height:92.20px;background:#fff;border:1.4px solid #d8d9dd;border-radius:23px;box-shadow:0 0 12px rgba(0,0,0,0.045)"></div>
<div class="a" style="left:2591.50px;top:1607.80px;width:108.50px;height:92.20px;background:#fff;border:1.4px solid #d8d9dd;border-radius:23px;box-shadow:0 0 12px rgba(0,0,0,0.045)"></div>
</div></body></html>
